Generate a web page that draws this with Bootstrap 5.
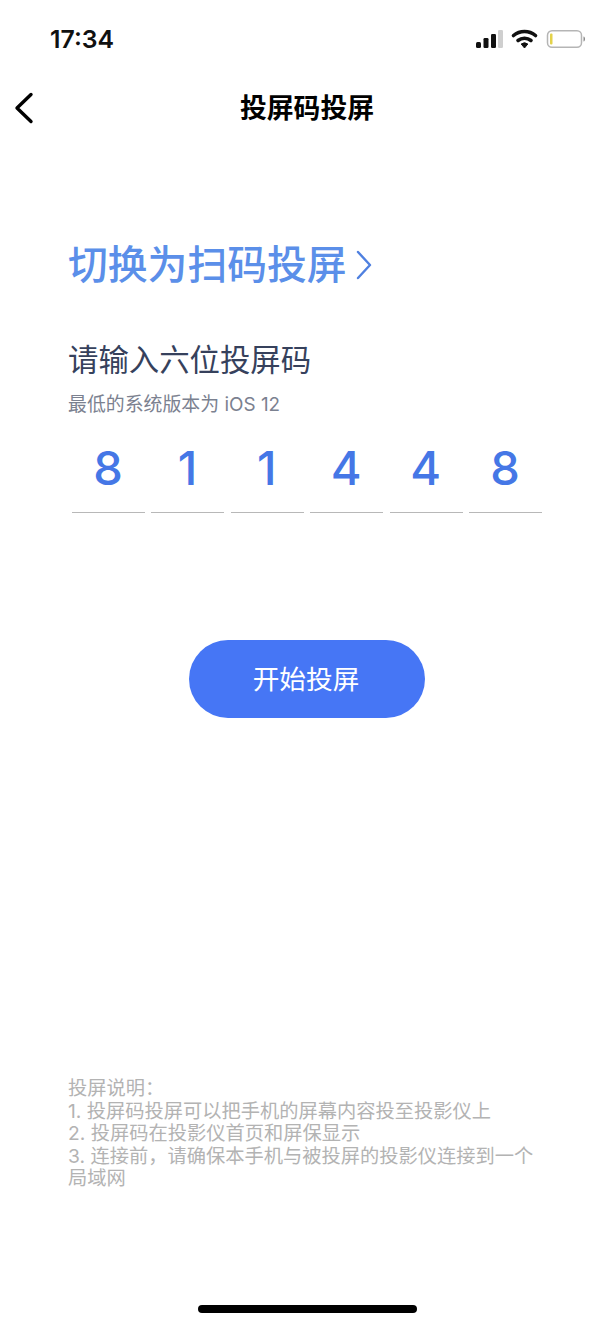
<!DOCTYPE html>
<html lang="zh-CN">
<head>
<meta charset="utf-8">
<title>投屏码投屏</title>
<link href="https://cdn.jsdelivr.net/npm/bootstrap@5.3.0/dist/css/bootstrap.min.css" rel="stylesheet">
<style>
html,body{height:100%;}
body{width:614px;height:1326px;overflow:hidden;background:#fff;font-family:"Inter","Noto Sans CJK SC",sans-serif;}
.screen{height:1326px;}
.status-row{height:75px;padding:0 28px 0 50px;}
.clock{font-family:"Inter",sans-serif;font-size:24.8px;font-weight:600;color:#111;line-height:29px;margin-top:25px;}
.status-icons{margin-top:26px;}
.top-row{height:66px;}
.back-btn{left:14px;top:17px;width:20px;height:32px;}
.page-title{font-size:26.8px;font-weight:700;color:#000;line-height:66px;}
.content{padding:0 68px;}
.switch-link{margin-top:97px;font-size:39.8px;line-height:54px;color:#5b8fe9;font-weight:500;gap:9px;text-decoration:none;}
.prompt{margin-top:47px;font-size:30.4px;line-height:42px;color:#36415c;font-weight:400;}
.hint{margin-top:11px;font-size:18.9px;line-height:26px;color:#7b8190;}
.code-row{margin-top:7px;padding:0 4px;gap:6.4px;width:478px;}
.code-cell{width:73px;height:88px;line-height:86px;border-bottom:1px solid #b8b8b8;text-align:center;font-size:47px;font-weight:500;color:#4577e6;padding-right:1px;}
.start-wrap{margin-top:127px;}
.start-btn{width:236px;height:78px;border-radius:39px;background:#4676f5;border:0;color:#fff;font-size:26.7px;line-height:1;padding:0 2px 0 0;}
.notes{margin-top:359px;padding-right:10px;font-size:19.25px;line-height:22.5px;color:#b3b3b3;}
.home-bar{left:198px;top:1305px;width:219px;height:8px;border-radius:4px;background:#000;}
</style>
</head>
<body>
<div class="screen position-relative d-flex flex-column">
  <div class="status-row d-flex justify-content-between align-items-start">
    <div class="clock">17:34</div>
    <svg class="status-icons" width="110" height="26" viewBox="0 0 110 26">
      <rect x="0" y="16" width="5" height="6" rx="1.5" fill="#111"/>
      <rect x="7.500" y="12" width="5" height="10" rx="1.2" fill="#111"/>
      <rect x="15" y="8" width="5" height="14" rx="1.2" fill="#111"/>
      <rect x="22" y="4" width="5" height="18" rx="1.2" fill="#cfcfcf"/>
      <path d="M37.500 9.500a17 17 0 0 1 22 0" fill="none" stroke="#111" stroke-width="3.600" stroke-linecap="round"/>
      <path d="M42 14.500a10.500 10.500 0 0 1 13 0" fill="none" stroke="#111" stroke-width="3.600" stroke-linecap="round"/>
      <path d="M45.200 18a5.500 5.500 0 0 1 6.600 0L48.500 22z" fill="#111" stroke="#111" stroke-linejoin="round"/>
      <rect x="71.500" y="4.700" width="34" height="16.600" rx="4.500" fill="#fff" stroke="#b5b5b5" stroke-width="1.500"/>
      <rect x="74" y="7.500" width="2.500" height="11" rx="1" fill="#e3d24a"/>
      <path d="M107.500 10.500c1.200.3 1.500 1.300 1.500 2.500s-.3 2.200-1.500 2.500z" fill="#888"/>
    </svg>
  </div>
  <div class="top-row position-relative text-center">
    <svg class="back-btn position-absolute" viewBox="0 0 20 32"><path d="M17 2.500 3 16l14 13.500" fill="none" stroke="#000" stroke-width="3.400" stroke-linecap="round" stroke-linejoin="round"/></svg>
    <div class="page-title">投屏码投屏</div>
  </div>
  <div class="content">
    <a class="switch-link d-flex align-items-center" href="#">
      <span>切换为扫码投屏</span>
      <svg width="16" height="30" viewBox="0 0 16 30"><path d="M2 2l12 13L2 28" fill="none" stroke="#4f80e0" stroke-width="2.400" stroke-linecap="round" stroke-linejoin="round"/></svg>
    </a>
    <div class="prompt">请输入六位投屏码</div>
    <div class="hint">最低的系统版本为 iOS 12</div>
    <div class="code-row d-flex">
      <div class="code-cell">8</div><div class="code-cell">1</div><div class="code-cell">1</div><div class="code-cell">4</div><div class="code-cell">4</div><div class="code-cell">8</div>
    </div>
  </div>
  <div class="start-wrap d-flex justify-content-center">
    <button type="button" class="btn start-btn">开始投屏</button>
  </div>
  <div class="content">
    <div class="notes">投屏说明：<br>1. 投屏码投屏可以把手机的屏幕内容投至投影仪上<br>2. 投屏码在投影仪首页和屏保显示<br>3. 连接前，请确保本手机与被投屏的投影仪连接到一个局域网</div>
  </div>
  <div class="home-bar position-absolute"></div>
</div>
<script src="https://cdn.jsdelivr.net/npm/bootstrap@5.3.0/dist/js/bootstrap.bundle.min.js"></script>
</body>
</html>
